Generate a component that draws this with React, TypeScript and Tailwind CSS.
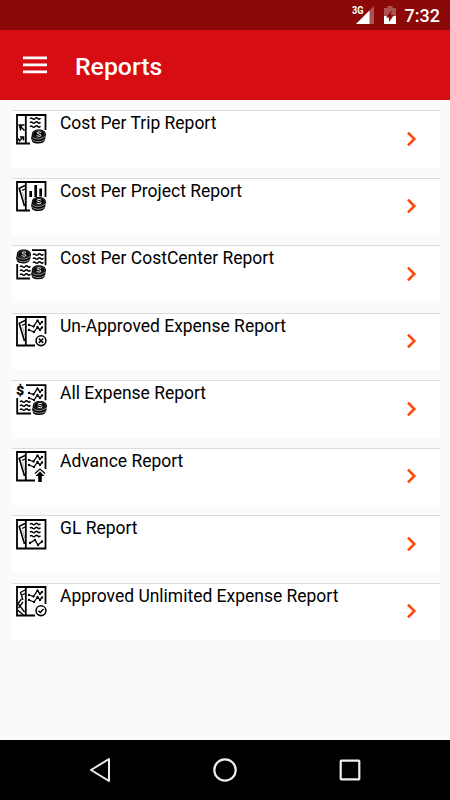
import React from 'react';

type IconKind = 'trip' | 'project' | 'costCenter' | 'unapproved' | 'all' | 'advance' | 'gl' | 'approved';

interface Report {
  title: string;
  icon: IconKind;
}

const reports: Report[] = [
  { title: 'Cost Per Trip Report', icon: 'trip' },
  { title: 'Cost Per Project Report', icon: 'project' },
  { title: 'Cost Per CostCenter Report', icon: 'costCenter' },
  { title: 'Un-Approved Expense Report', icon: 'unapproved' },
  { title: 'All Expense Report', icon: 'all' },
  { title: 'Advance Report', icon: 'advance' },
  { title: 'GL Report', icon: 'gl' },
  { title: 'Approved Unlimited Expense Report', icon: 'approved' },
];

function Coins({ x, y }: { x: number; y: number }) {
  return (
    <g transform={`translate(${x} ${y})`} stroke="none">
      <path d="M.8 5C.8 2 3.500 0 7.800 0S15 2 15 5c0 1-.2 1.600-.6 2.200.4 2.800-1 6.800-6.900 6.800S.6 12 .8 10.200C0 9.500 0 7.500.6 7Z" fill="#000" />
      <path
        d="M1 7.200c2 3 9.500 3.400 13.200-.4M1.200 10.200c3 2.600 9 2.800 12.600-.2"
        stroke="#bbb"
        strokeWidth="0.800"
      />
      <ellipse cx="7.800" cy="4.500" rx="5.800" ry="3.400" stroke="#777" strokeWidth="0.500" />
      <path d="M10.200 3.200C8.800 2 5.800 2.300 6 3.500s4 .8 4 2.200-3 1.300-4.500.2" stroke="#fff" strokeWidth="1" />
    </g>
  );
}

function Waves({ x, y, rows, gap = 4 }: { x: number; y: number; rows: number; gap?: number }) {
  return (
    <g transform={`translate(${x} ${y})`}>
      {Array.from({ length: rows }, (_, i) => (
        <path
          key={i}
          d={`M0 ${i * gap + 0.7}q1.300-1.300 2.600 0t2.600-0.200t2.600 0t2.600-0.400`}
          strokeWidth="1.500"
        />
      ))}
    </g>
  );
}

// Two line series with a dot on every point
function Trend() {
  return (
    <g>
      <path d="M13 9l4.500 1.500 4-6 2.500 3.500L26 6M13 14l5 2 3.500-5 2.500 3L26 11.500" strokeWidth="1.300" />
      <path
        d="M13 9h.01M17.500 10.500h.01M21.500 4.700h.01M24 8h.01M26 6h.01M13 14h.01M18 16h.01M21.500 11h.01M24 14h.01M26 11.500h.01"
        strokeWidth="2.300"
        strokeLinecap="round"
      />
    </g>
  );
}

// Loose page leaning out from behind the front one
function Sheet() {
  return (
    <g>
      <path d="M9 4.500L3.200 7.300L8.500 25" strokeWidth="1.600" />
      <path d="M6 9.500L9 8" strokeWidth="1.300" />
      <path d="M6.500 11L9 20" stroke="#999" strokeWidth="0.800" />
    </g>
  );
}

function ReportIcon({ kind }: { kind: IconKind }) {
  return (
    <svg
      className="mt-[2.900px] h-[31px] w-[31px] shrink-0 overflow-visible"
      viewBox="0 0 31 31"
      fill="none"
      stroke="#000"
      strokeWidth="1.800"
    >
      {kind === 'trip' && (
        <>
          <path d="M29.500 16V1H1v28.500h13M9.800 1v28.500" />
          <path d="M2.500 10.500l6 6M4.500 16.500V11h4M3 13.500l3-1M3 27l4.500-4M4 23h3.500v3.500M2 24.500l2 3" strokeWidth="1.500" />
          <Waves x={14} y={4} rows={3} />
          <Coins x={15} y={15.500} />
        </>
      )}
      {kind === 'project' && (
        <>
          <path d="M29.500 16V1H1v28.500h13M9.800 1v28.500" />
          <Sheet />
          <path d="M14.700 10v6M19.700 4v12M24.700 7.500v8" strokeWidth="2.700" />
          <Coins x={15} y={16} />
        </>
      )}
      {kind === 'costCenter' && (
        <>
          <path d="M16 1.200h13.500v15M1.200 15v14.500H14" />
          <Coins x={0} y={0.500} />
          <Waves x={17} y={5} rows={3} />
          <Waves x={4} y={17} rows={3} />
          <Coins x={15} y={16.300} />
        </>
      )}
      {kind === 'unapproved' && (
        <>
          <path d="M29.500 18V1H1v28.500h18M9.800 1v28.500" />
          <Sheet />
          <Trend />
          <circle cx="25" cy="24.700" r="4.900" strokeWidth="1.600" />
          <path d="M22.800 22.500l4.400 4.400M27.200 22.500l-4.400 4.400" strokeWidth="1.600" />
        </>
      )}
      {kind === 'all' && (
        <>
          <path d="M10 1.200h19.500v15M1.200 14v15.500H15" />
          <text
            x="0.200"
            y="11"
            fill="#000"
            stroke="#000"
            strokeWidth="0.400"
            fontSize="13.500"
            fontWeight="700"
            fontFamily="Roboto, sans-serif"
          >
            $
          </text>
          <Trend />
          <Waves x={4} y={17} rows={3} />
          <Coins x={16} y={17} />
        </>
      )}
      {kind === 'advance' && (
        <>
          <path d="M29.500 18V1H1v28.500h18M9.800 1v28.500" />
          <Sheet />
          <Trend />
          <path d="M19.500 25l4.500-4.500 4.500 4.500h-2.700v6h-3.600v-6Z" fill="#000" stroke="none" />
          <path d="M19 22.500l5-4.500 5 4.500" strokeWidth="1.200" />
        </>
      )}
      {kind === 'gl' && (
        <>
          <path d="M1 1h28.500v28.500H1ZM9.800 1v28.500" />
          <Sheet />
          <Waves x={14} y={4.500} rows={4} />
          <path d="M14 24l5-3 3 5 4-3.500" strokeWidth="1.400" />
          <path d="M14 24h.01M19 21h.01M22 26h.01M26 22.500h.01" strokeWidth="2.400" strokeLinecap="round" />
        </>
      )}
      {kind === 'approved' && (
        <>
          <path d="M29.500 18V1H1v28.500h18M9.800 1v28.500" />
          <path d="M9 4L4.500 6.500L7 14M6 9l3-1.500M5.500 13L2 17.500L8.500 26M1.500 24l6 5M2.500 22L7 16" strokeWidth="1.300" />
          <Trend />
          <circle cx="25" cy="24.700" r="4.900" strokeWidth="1.600" />
          <path d="M22.500 24.700l1.800 1.800 3.200-3.500" strokeWidth="1.500" />
        </>
      )}
    </svg>
  );
}

function StatusBar() {
  return (
    <div className="flex h-[30px] items-center justify-end bg-[#8b0a09] pr-[10px] text-white">
      <svg className="h-[20px] w-[24px]" viewBox="0 0 24 20">
        <path d="M23 1v18H5Z" fill="#fff" fillOpacity="0.300" />
        <path d="M18.500 5.500V19H5Z" fill="#fff" />
        <text
          x="1"
          y="9"
          fill="#fff"
          fontSize="10"
          fontWeight="700"
          fontFamily="Roboto, sans-serif"
          textLength="11.500"
          lengthAdjust="spacingAndGlyphs"
        >
          3G
        </text>
      </svg>
      <svg className="ml-[8px] h-[20px] w-[14px]" viewBox="0 0 14 20">
        <path d="M4.500 1h5v2H13v8H1V3h3.500Z" fill="#fff" fillOpacity="0.300" />
        <path d="M1 11h12v8H1Z" fill="#fff" />
        <path d="M8.500 5.500L3 12.500h3V17l5-7H8Z" fill="#8b0a09" />
      </svg>
      <span className="ml-[8px] pt-[2px] text-[18px] leading-[30px] font-medium">7:32</span>
    </div>
  );
}

function ReportRow({ report }: { report: Report }) {
  return (
    <button type="button" className="flex h-[57.500px] w-full items-start border-t border-[#dcdcdc] bg-white pl-1 text-left">
      <ReportIcon kind={report.icon} />
      <span className="ml-[13px] grow pt-[1px] text-[17.480px] leading-[22px] text-black">{report.title}</span>
      <svg
        className="mt-[18.900px] mr-[21px] h-[18px] w-[14px]"
        viewBox="0 0 14 18"
        fill="none"
        stroke="#ff4a0a"
        strokeWidth="2.600"
      >
        <path d="M3 2.700l6.300 6.300L3 15.300" />
      </svg>
    </button>
  );
}

export default function App() {
  return (
    <div className="flex h-[800px] w-[450px] flex-col overflow-hidden bg-[#fafafa] font-[Roboto,sans-serif]">
      <StatusBar />
      <header className="flex h-[70px] items-center bg-[#d60d12] pl-[23px] text-white">
        <svg className="h-[18px] w-[24px]" viewBox="0 0 24 18" fill="#fff">
          <path d="M0 .5h24v2.700H0ZM0 7.500h24v2.700H0ZM0 14.500h24v2.700H0Z" />
        </svg>
        <h1 className="ml-[28px] pt-[3px] text-[24.800px] leading-[30px] font-medium">Reports</h1>
      </header>
      <main className="flex grow flex-col gap-[10px] pt-[10px] pr-[10px] pl-3">
        {reports.map((report) => (
          <ReportRow key={report.title} report={report} />
        ))}
      </main>
      <nav className="flex h-[60px] items-center justify-between bg-black px-[87px]">
        <svg className="h-[26px] w-[26px]" viewBox="0 0 26 26" fill="none" stroke="#eee" strokeWidth="2" strokeLinejoin="round">
          <path d="M22 2v22L4 13Z" />
        </svg>
        <svg className="h-[26px] w-[26px]" viewBox="0 0 26 26" fill="none" stroke="#eee" strokeWidth="2.200">
          <circle cx="13" cy="13" r="10.700" />
        </svg>
        <svg className="h-[26px] w-[26px]" viewBox="0 0 26 26" fill="none" stroke="#eee" strokeWidth="2.200">
          <rect x="3.700" y="3.700" width="18.600" height="18.600" rx="0.500" />
        </svg>
      </nav>
    </div>
  );
}
